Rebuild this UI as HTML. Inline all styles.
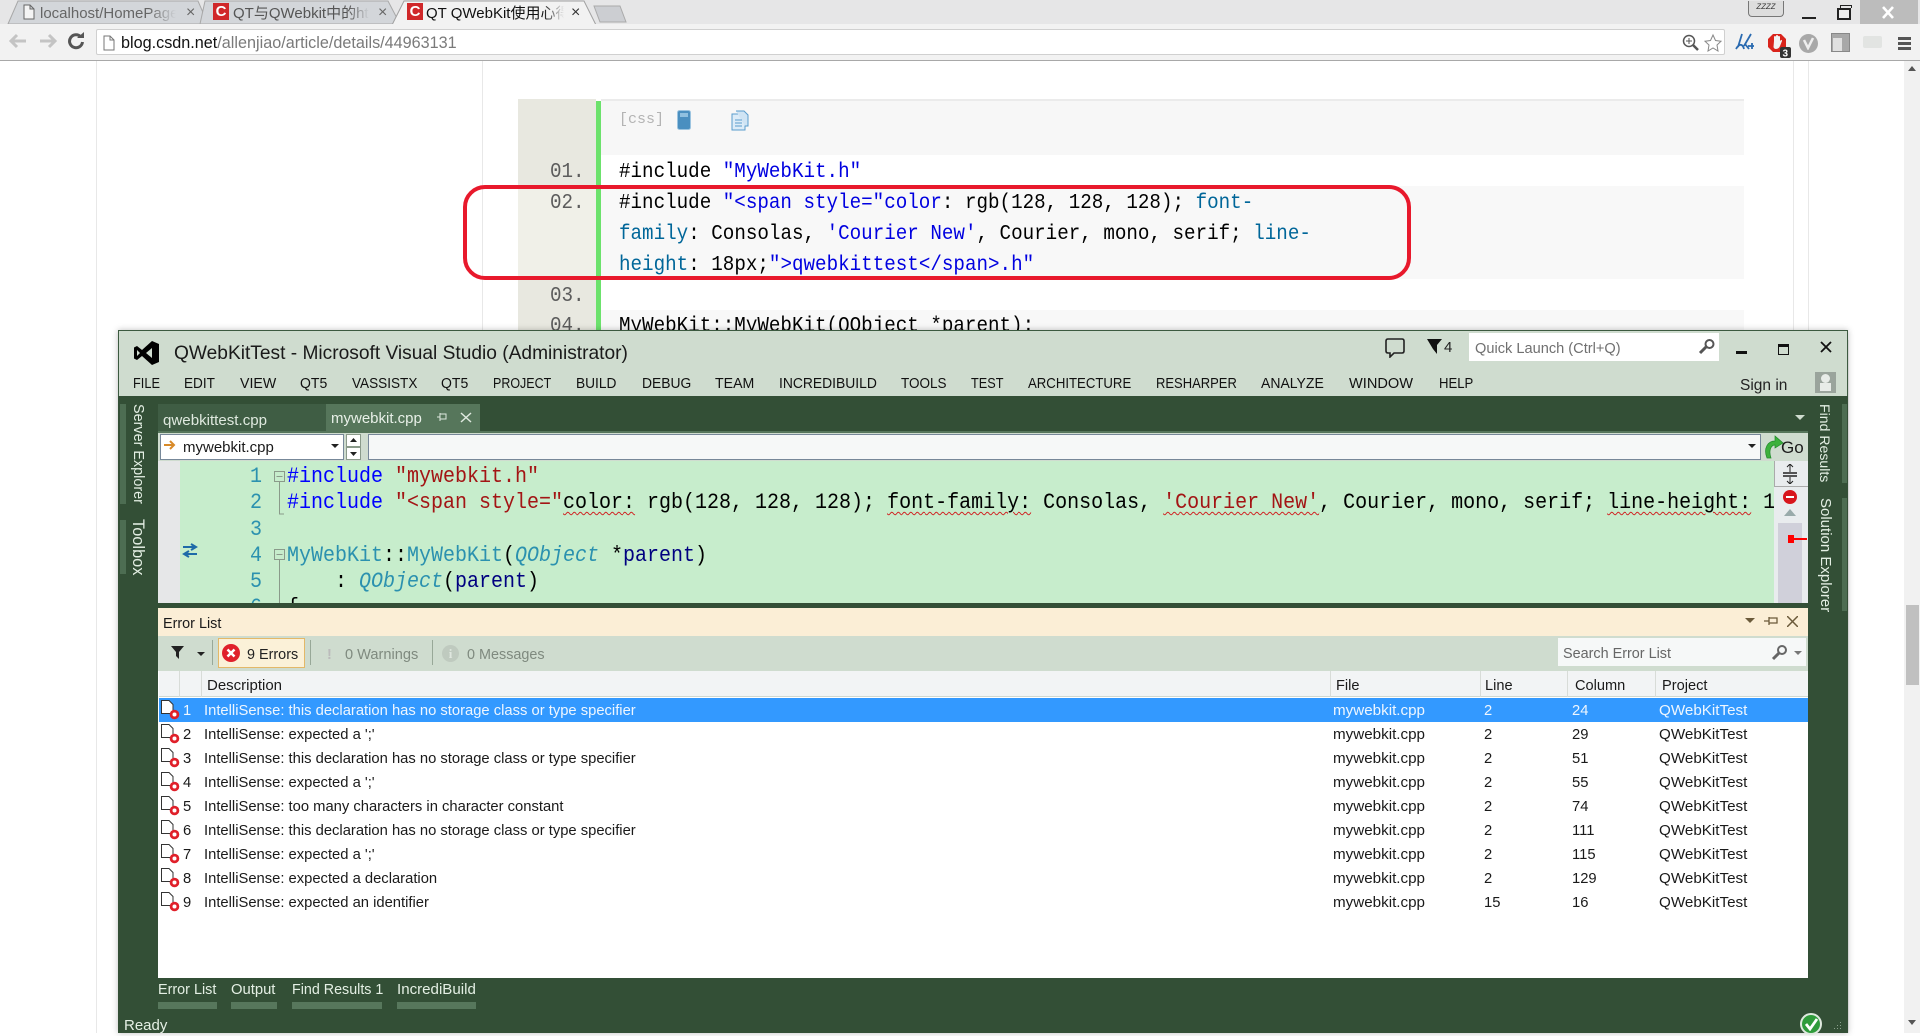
<!DOCTYPE html>
<html><head><meta charset="utf-8"><title>QT QWebKit</title>
<style>
*{box-sizing:border-box}
html,body{margin:0;padding:0;width:1920px;height:1033px;overflow:hidden;background:#fff;font-family:"Liberation Sans","Noto Sans CJK SC",sans-serif;color:#000}
.a{position:absolute}
.t{position:absolute;white-space:nowrap;line-height:20px;height:20px}
.m{position:absolute;white-space:pre;font-family:"Liberation Mono",monospace;transform-origin:0 50%;line-height:24px;height:24px}
.w .m{font-size:21px;transform:scaleX(.915);color:#000}
.e .m{font-size:22px;transform:scaleX(.909);color:#000}
.b{color:#0000e0}.c{color:#006699}
.k{color:#0000ff}.s{color:#a31515}.y{color:#2b91af}.p{color:#000080}.i{font-style:italic}
.q{text-decoration:underline wavy #d02020 1px;text-underline-offset:3px}
.menu .t{font-size:14.6px;top:374px;color:#111;transform-origin:0 50%}
.row{position:absolute;left:159px;width:1649px;height:24px;font-size:14.78px;color:#1a1a1a}
.row .t{top:3px}
.row .f{font-size:15.2px}
.row svg{position:absolute;left:2px;top:2px}
.v{position:absolute;white-space:nowrap;color:#e4efe4;line-height:20px;writing-mode:vertical-rl}
.h{position:absolute;top:676px;font-size:14.6px;line-height:20px;color:#1a1a1a}
</style></head><body>

<!-- browser chrome -->
<div class="a" style="left:0;top:0;width:1920px;height:24px;background:#e6e6e7"></div>
<svg class="a" style="left:0;top:0" width="640" height="26" viewBox="0 0 640 26">
<path d="M8 24L18 1H198L208 24Z" fill="#d3d6da" stroke="#a8a8a8"/>
<path d="M200 24L205 1H388L400 24Z" fill="#d3d6da" stroke="#a8a8a8"/>
<path d="M392 25L404 1H584L596 25Z" fill="#f2f2f2" stroke="#a0a0a0"/>
<path d="M594 6H620L626 22H600Z" fill="#ccced2" stroke="#aaa"/>
</svg>
<svg class="a" style="left:23px;top:4px" width="12" height="16" viewBox="0 0 12 16"><path d="M1 1H7L11 5V15H1Z M7 1V5H11" fill="#f4f4f4" stroke="#666"/></svg>
<div class="t" style="left:40px;top:4px;font-size:15px;color:#666;width:136px;overflow:hidden;-webkit-mask-image:linear-gradient(90deg,#000 80%,transparent)">localhost/HomePage</div>
<div class="t" style="left:186px;top:3px;font-size:16px;color:#666">×</div>
<div class="a" style="left:213px;top:3px;width:16px;height:17px;background:#d0282a;color:#fff;font:bold 15px/17px 'Liberation Sans';text-align:center">C</div>
<div class="t" style="left:233px;top:4px;font-size:15px;color:#555;width:136px;overflow:hidden;-webkit-mask-image:linear-gradient(90deg,#000 85%,transparent)">QT与QWebkit中的ht</div>
<div class="t" style="left:378px;top:3px;font-size:16px;color:#666">×</div>
<div class="a" style="left:407px;top:3px;width:16px;height:17px;background:#d0282a;color:#fff;font:bold 15px/17px 'Liberation Sans';text-align:center">C</div>
<div class="t" style="left:426px;top:4px;font-size:15px;color:#111;width:138px;overflow:hidden;-webkit-mask-image:linear-gradient(90deg,#000 85%,transparent)">QT QWebKit使用心得</div>
<div class="t" style="left:571px;top:3px;font-size:16px;color:#333">×</div>

<div class="a" style="left:1748px;top:1px;width:36px;height:16px;background:#ddd;border:1px solid #777;border-top:0;border-radius:0 0 4px 4px;font:italic 8px/14px 'Liberation Mono';text-align:center;color:#333">ZZZZ</div>
<div class="a" style="left:1802px;top:17px;width:14px;height:2px;background:#222"></div>
<div class="a" style="left:1837px;top:8px;width:14px;height:12px;border:2px solid #222;background:#eee"></div>
<div class="a" style="left:1840px;top:5px;width:12px;height:3px;border:1px solid #222;border-bottom:0"></div>
<div class="a" style="left:1860px;top:0;width:58px;height:24px;background:#bcbcbc"></div>
<svg class="a" style="left:1881px;top:6px" width="14" height="13"><path d="M2 1L12 12M12 1L2 12" stroke="#fff" stroke-width="2.6"/></svg>

<div class="a" style="left:0;top:24px;width:1920px;height:37px;background:#f2f2f2;border-bottom:1px solid #a8a8a8"></div>
<svg class="a" style="left:8px;top:32px" width="72" height="20" viewBox="0 0 72 20"><path d="M18 9H4M9 3L3 9L9 15" fill="none" stroke="#c4c4c4" stroke-width="3"/><path d="M32 9H46M41 3L47 9L41 15" fill="none" stroke="#c4c4c4" stroke-width="3"/></svg>
<svg class="a" style="left:67px;top:32px" width="18" height="18" viewBox="0 0 18 18"><path d="M14 5A6.5 6.5 0 1 0 15.5 10" fill="none" stroke="#555" stroke-width="3"/><path d="M10 6H17V0Z" fill="#555"/></svg>
<div class="a" style="left:96px;top:29px;width:1629px;height:26px;background:#fff;border:1px solid #d0d0d0;border-radius:2px"></div>
<svg class="a" style="left:103px;top:35px" width="12" height="16" viewBox="0 0 12 16"><path d="M1 1H7L11 5V15H1Z M7 1V5H11" fill="#fff" stroke="#777"/></svg>
<div class="t" style="left:121px;top:33px;font-size:16.2px;color:#7a7a7a"><span style="color:#111">blog.csdn.net</span>/allenjiao/article/details/44963131</div>
<svg class="a" style="left:1682px;top:34px" width="20" height="18" viewBox="0 0 20 18"><circle cx="7" cy="7" r="5.5" fill="none" stroke="#555" stroke-width="1.5"/><path d="M11 11L16 16" stroke="#555" stroke-width="2.5"/><path d="M4 7H10M7 4V10" stroke="#555"/></svg>
<svg class="a" style="left:1703px;top:33px" width="20" height="20" viewBox="0 0 20 20"><path d="M10 2L12.5 7.5L18 8.2L14 12L15 18L10 15L5 18L6 12L2 8.2L7.500 7.500Z" fill="#fff" stroke="#888"/></svg>
<svg class="a" style="left:1735px;top:33px" width="21" height="20" viewBox="0 0 21 20"><path d="M7 1L3 14M16 1L9 13M1 16C5 9 8 12 9 16M10 11L14 16M13 13H19M17 10V16" fill="none" stroke="#2a6ab0" stroke-width="1.800"/></svg>
<svg class="a" style="left:1767px;top:33px" width="26" height="26" viewBox="0 0 26 26"><path d="M6 1H14L19 6V14L14 19H6L1 14V6Z" fill="#d9241c"/><path d="M7 8V4Q7 3 8 3Q9 3 9 4V7V3Q9 2 10 2Q11 2 11 3V7V3.500Q11 3 12 3Q13 3 13 4V8L14 7Q15 6.500 15 8L13 13Q12 16 9 16Q7 16 6.500 14Z" fill="#f2f2f2"/><rect x="13" y="14" width="11" height="11" rx="2" fill="#333"/><text x="15.500" y="23.500" font-size="10" font-weight="bold" fill="#fff" font-family="Liberation Sans">3</text></svg>
<div class="a" style="left:1799px;top:34px;width:19px;height:19px;border-radius:50%;background:#a8a8a8"></div>
<svg class="a" style="left:1802px;top:37px" width="13" height="13"><path d="M2 3L6 11L11 1" fill="none" stroke="#eee" stroke-width="2.500"/></svg>
<div class="a" style="left:1831px;top:33px;width:19px;height:19px;background:#a8a8a8;border:1px solid #888"></div>
<div class="a" style="left:1833px;top:38px;width:9px;height:13px;background:#e0e0e0"></div>
<div class="a" style="left:1863px;top:36px;width:19px;height:12px;background:#e2e4e2;border-radius:2px"></div>
<div class="a" style="left:1898px;top:37px;width:13px;height:3px;background:#555;box-shadow:0 5px 0 #555,0 10px 0 #555"></div>

<!-- page -->
<div class="a" style="left:96px;top:61px;width:1px;height:972px;background:#e8e8e8"></div>
<div class="a" style="left:482px;top:61px;width:1px;height:300px;background:#e8e8e8"></div>
<div class="a" style="left:1793px;top:61px;width:1px;height:300px;background:#e8e8e8"></div>
<div class="a" style="left:1808px;top:61px;width:1px;height:300px;background:#e8e8e8"></div>
<div class="a" style="left:1848px;top:340px;width:1px;height:693px;background:#eee"></div>
<div class="a" style="left:1904px;top:61px;width:16px;height:972px;background:#f1f1f1"></div>
<div class="a" style="left:1906px;top:605px;width:13px;height:80px;background:#c0c0c0"></div>
<svg class="a" style="left:1907px;top:66px" width="10" height="6"><path d="M5 0L9 5H1Z" fill="#555"/></svg>
<svg class="a" style="left:1907px;top:1020px" width="10" height="6"><path d="M5 5L9 0H1Z" fill="#555"/></svg>

<div class="w">
<div class="a" style="left:518px;top:99px;width:78px;height:241px;background:#e8e8e0"></div>
<div class="a" style="left:518px;top:186px;width:78px;height:93px;background:#f0f0e8"></div>
<div class="a" style="left:601px;top:99px;width:1143px;height:241px;background:#fff"></div>
<div class="a" style="left:601px;top:99px;width:1143px;height:56px;background:#f7f7f7;border-top:2px solid #ebebeb"></div>
<div class="a" style="left:601px;top:186px;width:1143px;height:93px;background:#f8f8f8"></div>
<div class="a" style="left:601px;top:310px;width:1143px;height:30px;background:#f8f8f8"></div>
<div class="a" style="left:596px;top:101px;width:5px;height:239px;background:#6ce26c"></div>
<div class="t" style="left:619px;top:110px;font:15px/20px 'Liberation Mono';color:#b4b4b4">[css]</div>
<svg class="a" style="left:677px;top:110px" width="14" height="20" viewBox="0 0 14 20"><rect x=".5" y=".5" width="13" height="19" rx="2" fill="#4a8fc0" stroke="#9cc4e0"/><rect x="3" y="3" width="8" height="4" fill="#8fc0e0"/></svg>
<svg class="a" style="left:730px;top:110px" width="20" height="22" viewBox="0 0 20 22"><path d="M2 4H12L15 7V20H2Z" fill="#dcecf8" stroke="#5a9ccc"/><path d="M6 1H14L18 5V16H15" fill="#cfe4f4" stroke="#5a9ccc"/><path d="M5 10H12M5 13H12M5 16H12" stroke="#5a9ccc"/></svg>

<div class="m" style="left:550px;top:161px;color:#5c5c5c">01.</div>
<div class="m" style="left:550px;top:192px;color:#5c5c5c">02.</div>
<div class="m" style="left:550px;top:285px;color:#5c5c5c">03.</div>
<div class="m" style="left:550px;top:315px;color:#5c5c5c">04.</div>
<div class="m" style="left:619px;top:161px">#include <span class="b">"MyWebKit.h"</span></div>
<div class="m" style="left:619px;top:192px">#include <span class="b">"&lt;span style="color</span>: rgb(128, 128, 128); <span class="c">font-</span></div>
<div class="m" style="left:619px;top:223px"><span class="c">family</span>: Consolas, <span class="b">'Courier New'</span>, Courier, mono, serif; <span class="c">line-</span></div>
<div class="m" style="left:619px;top:254px"><span class="c">height</span>: 18px;<span class="b">"&gt;qwebkittest&lt;/span&gt;.h"</span></div>
<div class="m" style="left:619px;top:315px">MyWebKit::MyWebKit(QObject *parent):</div>
</div>
<div class="a" style="left:463px;top:185px;width:948px;height:95px;border:4px solid #e8192c;border-radius:22px"></div>

<!-- VS window -->
<div class="a" style="left:118px;top:330px;width:1730px;height:703px;background:#334f36;box-shadow:0 0 6px rgba(0,0,0,.25)"></div>
<div class="a" style="left:118px;top:330px;width:1730px;height:66px;background:#cfdccf;border:1px solid #3c5a40;border-bottom:0"></div>
<svg class="a" style="left:134px;top:340px" width="26" height="26" viewBox="0 0 26 26"><path d="M18 1L25 4V22L18 25L8 16L3 20L0 18.500V7.500L3 6L8 10ZM18 8L12 13L18 18ZM3 10V16L6 13Z" fill="#000" fill-rule="evenodd"/></svg>
<div class="t" style="left:174px;top:344px;font-size:19.17px;color:#1a1a1a">QWebKitTest - Microsoft Visual Studio (Administrator)</div>
<div class="menu">
<div class="t" style="left:133px;transform:scaleX(.875)">FILE</div><div class="t" style="left:184px;transform:scaleX(.93)">EDIT</div><div class="t" style="left:240px;transform:scaleX(.97)">VIEW</div><div class="t" style="left:300px;transform:scaleX(.96)">QT5</div><div class="t" style="left:352px;transform:scaleX(.93)">VASSISTX</div><div class="t" style="left:441px;transform:scaleX(.96)">QT5</div><div class="t" style="left:493px;transform:scaleX(.855)">PROJECT</div><div class="t" style="left:576px;transform:scaleX(.94)">BUILD</div><div class="t" style="left:642px;transform:scaleX(.95)">DEBUG</div><div class="t" style="left:715px;transform:scaleX(.97)">TEAM</div><div class="t" style="left:779px;transform:scaleX(.95)">INCREDIBUILD</div><div class="t" style="left:901px;transform:scaleX(.925)">TOOLS</div><div class="t" style="left:971px;transform:scaleX(.87)">TEST</div><div class="t" style="left:1028px;transform:scaleX(.903)">ARCHITECTURE</div><div class="t" style="left:1156px;transform:scaleX(.89)">RESHARPER</div><div class="t" style="left:1261px;transform:scaleX(.96)">ANALYZE</div><div class="t" style="left:1349px">WINDOW</div><div class="t" style="left:1439px;transform:scaleX(.9)">HELP</div>
</div>
<div class="t" style="left:1740px;top:376px;font-size:15.5px;color:#222">Sign in</div>
<div class="a" style="left:1815px;top:372px;width:21px;height:21px;background:#9aa49c"></div>
<div class="a" style="left:1821px;top:374px;width:9px;height:9px;border-radius:50%;background:#e8ece8"></div>
<div class="a" style="left:1820px;top:383px;width:11px;height:8px;background:#e8ece8"></div>
<svg class="a" style="left:1385px;top:338px" width="20" height="20" viewBox="0 0 20 20"><path d="M3 1H17Q19 1 19 3V13Q19 15 17 15H9L5 19V15H3Q1 15 1 13V3Q1 1 3 1Z" fill="none" stroke="#222" stroke-width="1.600"/></svg>
<svg class="a" style="left:1426px;top:338px" width="17" height="17"><path d="M1 1H16L11 7V16L7 11Z" fill="#111"/></svg>
<div class="t" style="left:1444px;top:338px;font-size:15px;color:#222">4</div>
<div class="a" style="left:1469px;top:333px;width:250px;height:28px;background:#fff"></div>
<div class="t" style="left:1475px;top:339px;font-size:14.6px;color:#707070">Quick Launch (Ctrl+Q)</div>
<svg class="a" style="left:1698px;top:338px" width="18" height="18" viewBox="0 0 18 18"><circle cx="11.500" cy="6" r="4" fill="none" stroke="#555" stroke-width="2"/><path d="M8 9L2 15" stroke="#555" stroke-width="3"/></svg>
<div class="a" style="left:1736px;top:351px;width:11px;height:3px;background:#111"></div>
<div class="a" style="left:1778px;top:344px;width:11px;height:11px;border:1px solid #111;border-top:3px solid #111"></div>
<svg class="a" style="left:1820px;top:341px" width="12" height="12"><path d="M1 1L11 11M11 1L1 11" stroke="#111" stroke-width="1.800"/></svg>

<!-- side bars -->
<div class="a" style="left:120px;top:404px;width:6px;height:100px;background:#4d6d52"></div>
<div class="a" style="left:120px;top:520px;width:6px;height:54px;background:#4d6d52"></div>
<div class="v" style="left:128px;top:404px;font-size:14.4px">Server Explorer</div>
<div class="v" style="left:128px;top:519px;font-size:16.4px">Toolbox</div>
<div class="a" style="left:1842px;top:404px;width:5px;height:79px;background:#4d6d52"></div>
<div class="a" style="left:1842px;top:498px;width:5px;height:113px;background:#4d6d52"></div>
<div class="v" style="left:1815px;top:404px;font-size:14.1px">Find Results</div>
<div class="v" style="left:1815px;top:498px;font-size:15px">Solution Explorer</div>

<!-- doc tabs -->
<div class="a" style="left:158px;top:404px;width:168px;height:28px;background:#3f5d44"></div>
<div class="a" style="left:326px;top:404px;width:154px;height:28px;background:#56765b"></div>
<div class="a" style="left:158px;top:431px;width:1650px;height:3px;background:#56765b"></div>
<div class="t" style="left:163px;top:411px;font-size:15.1px;color:#dfe9df">qwebkittest.cpp</div>
<div class="t" style="left:331px;top:409px;font-size:15px;color:#e8f0e8">mywebkit.cpp</div>
<svg class="a" style="left:436px;top:411px" width="12" height="12" viewBox="0 0 12 12"><path d="M1 6H4M4 2V10M4 3H10V8H4" fill="none" stroke="#dfe9df"/></svg>
<svg class="a" style="left:460px;top:412px" width="12" height="11"><path d="M1 1L11 10M11 1L1 10" stroke="#dfe9df" stroke-width="1.500"/></svg>
<svg class="a" style="left:1795px;top:415px" width="10" height="6"><path d="M0 0H10L5 5Z" fill="#cfdccf"/></svg>

<!-- nav bar -->
<div class="a" style="left:158px;top:433px;width:1650px;height:28px;background:#cfdccf"></div>
<div class="a" style="left:160px;top:434px;width:184px;height:26px;background:#fff;border:1px solid #789"></div>
<svg class="a" style="left:163px;top:439px" width="13" height="13"><path d="M1 6H10M7 2L11 6L7 10" fill="none" stroke="#d88a28" stroke-width="2"/></svg>
<div class="t" style="left:183px;top:438px;font-size:15px;color:#1a1a1a">mywebkit.cpp</div>
<svg class="a" style="left:331px;top:444px" width="8" height="5"><path d="M0 0H8L4 4Z" fill="#222"/></svg>
<div class="a" style="left:346px;top:434px;width:15px;height:13px;background:#fff;border:1px solid #8a9a8a"></div>
<div class="a" style="left:346px;top:447px;width:15px;height:13px;background:#fff;border:1px solid #8a9a8a"></div>
<svg class="a" style="left:350px;top:437px" width="7" height="22"><path d="M3.500 1L7 5H0ZM0 15H7L3.500 19Z" fill="#222"/></svg>
<div class="a" style="left:368px;top:434px;width:1393px;height:26px;background:#f6f8f8;border:1px solid #789"></div>
<svg class="a" style="left:1748px;top:444px" width="8" height="5"><path d="M0 0H8L4 4Z" fill="#222"/></svg>
<svg class="a" style="left:1764px;top:435px" width="20" height="24" viewBox="0 0 20 24"><path d="M3 23C-1 13 4 6 11 6V1L19 8L11 13V10C8 10 4 14 7 23Z" fill="#3cb13c" stroke="#1f8a2a" stroke-width=".7"/></svg>
<div class="t" style="left:1781px;top:438px;font-size:17px;color:#1a1a1a">Go</div>

<!-- editor -->
<div class="e">
<div class="a" style="left:158px;top:461px;width:22px;height:142px;background:#e6e7e8"></div>
<div class="a" style="left:180px;top:461px;width:1594px;height:142px;background:#c7edcc;overflow:hidden"></div>
<svg class="a" style="left:181px;top:543px" width="18" height="16" viewBox="0 0 18 16"><path d="M2 4H14M10 1L15 4L10 7M16 11H4M8 8L3 11L8 14" fill="none" stroke="#1e6aa8" stroke-width="2"/></svg>
<div class="a" style="left:180px;top:461px;width:1594px;height:142px;overflow:hidden">
<div class="m" style="left:70px;top:4px;color:#2b91af">1</div>
<div class="m" style="left:70px;top:30px;color:#2b91af">2</div>
<div class="m" style="left:70px;top:57px;color:#2b91af">3</div>
<div class="m" style="left:70px;top:83px;color:#2b91af">4</div>
<div class="m" style="left:70px;top:109px;color:#2b91af">5</div>
<div class="m" style="left:70px;top:135px;color:#2b91af">6</div>
<div class="m" style="left:107px;top:4px"><span class="k">#include</span> <span class="s">"mywebkit.h"</span></div>
<div class="m" style="left:107px;top:30px"><span class="k">#include</span> <span class="s">"&lt;span style="</span><span class="q">color:</span> rgb(128, 128, 128); <span class="q">font-family:</span> Consolas, <span class="s q">'Courier New'</span>, Courier, mono, serif; <span class="q">line-height:</span> 18px;"&gt;</div>
<div class="m" style="left:107px;top:83px"><span class="y">MyWebKit</span>::<span class="y">MyWebKit</span>(<span class="y i">QObject</span> *<span class="p">parent</span>)</div>
<div class="m" style="left:107px;top:109px">    : <span class="y i">QObject</span>(<span class="p">parent</span>)</div>
<div class="m" style="left:107px;top:135px">{</div>
</div>
<svg class="a" style="left:273px;top:468px" width="14" height="135" viewBox="0 0 14 135"><g fill="none" stroke="#8a9a8a"><rect x="1.500" y="3.500" width="10" height="10" fill="#c7edcc"/><path d="M3.500 8.500H9.500M6.500 13.500V46H11"/><rect x="1.500" y="81.500" width="10" height="10" fill="#c7edcc"/><path d="M3.500 86.500H9.500M6.500 91.500V135"/></g></svg>
<div class="a" style="left:1774px;top:461px;width:34px;height:142px;background:#e9ecee"></div>
<div class="a" style="left:1774px;top:461px;width:34px;height:26px;border-left:1px solid #aaa;border-bottom:1px solid #aaa"></div>
<svg class="a" style="left:1782px;top:464px" width="18" height="20" viewBox="0 0 18 20"><path d="M1 9H15M1 12H15" stroke="#222" stroke-width="1.500"/><path d="M8 0V8M8 13V20M5 3L8 0L11 3M5 17L8 20L11 17" fill="none" stroke="#222"/></svg>
<div class="a" style="left:1783px;top:490px;width:14px;height:14px;border-radius:50%;background:#d8151c"></div>
<div class="a" style="left:1786px;top:496px;width:8px;height:2px;background:#fff"></div>
<svg class="a" style="left:1784px;top:509px" width="12" height="8"><path d="M6 0L12 7H0Z" fill="#9aa"/></svg>
<div class="a" style="left:1778px;top:523px;width:24px;height:80px;background:#d0d0da"></div>
<div class="a" style="left:1788px;top:535px;width:6px;height:8px;background:#f00"></div>
<div class="a" style="left:1794px;top:538px;width:13px;height:2px;background:#f00"></div>
</div>

<!-- error list -->
<div class="a" style="left:158px;top:608px;width:1650px;height:370px;background:#fff"></div>
<div class="a" style="left:158px;top:608px;width:1650px;height:28px;background:#fbeed6"></div>
<div class="t" style="left:163px;top:614px;font-size:14.4px;color:#1a1a1a">Error List</div>
<svg class="a" style="left:1745px;top:618px" width="10" height="6"><path d="M0 0H10L5 5Z" fill="#6b5a3a"/></svg>
<svg class="a" style="left:1764px;top:616px" width="15" height="10"><path d="M0 5H5M5 1V9M5 2H13V7H5" fill="none" stroke="#6b5a3a" stroke-width="1.300"/></svg>
<svg class="a" style="left:1787px;top:616px" width="11" height="11"><path d="M0 0L11 11M11 0L0 11" stroke="#6b5a3a" stroke-width="1.500"/></svg>
<div class="a" style="left:158px;top:636px;width:1650px;height:35px;background:#cfdccf"></div>
<svg class="a" style="left:171px;top:646px" width="14" height="14"><path d="M0 0H13L8 6V13L5 10V6Z" fill="#222"/></svg>
<svg class="a" style="left:197px;top:652px" width="8" height="5"><path d="M0 0H8L4 4Z" fill="#222"/></svg>
<div class="a" style="left:212px;top:640px;width:1px;height:25px;background:#98a898"></div>
<div class="a" style="left:218px;top:638px;width:87px;height:30px;background:#fbf1d8;border:1px solid #e3b868"></div>
<svg class="a" style="left:222px;top:644px" width="18" height="18" viewBox="0 0 18 18"><circle cx="9" cy="9" r="9" fill="#e0202a"/><path d="M5.500 5.500L12.500 12.500M12.500 5.500L5.500 12.500" stroke="#fff" stroke-width="2.500"/></svg>
<div class="t" style="left:247px;top:645px;font-size:14.4px;color:#222">9 Errors</div>
<div class="a" style="left:310px;top:640px;width:1px;height:25px;background:#98a898"></div>
<div class="t" style="left:327px;top:645px;font-size:14.5px;color:#bbb;font-weight:bold">!</div>
<div class="t" style="left:345px;top:645px;font-size:14.6px;color:#7f8a7f">0 Warnings</div>
<div class="a" style="left:432px;top:640px;width:1px;height:25px;background:#98a898"></div>
<div class="a" style="left:442px;top:645px;width:17px;height:17px;border-radius:50%;background:#bfcabf;color:#dfe7df;font:bold 13px/17px 'Liberation Serif';text-align:center">i</div>
<div class="t" style="left:467px;top:645px;font-size:14.4px;color:#7f8a7f">0 Messages</div>
<div class="a" style="left:1558px;top:638px;width:248px;height:28px;background:#f6f8f8"></div>
<div class="t" style="left:1563px;top:644px;font-size:14.4px;color:#666">Search Error List</div>
<svg class="a" style="left:1771px;top:644px" width="18" height="18" viewBox="0 0 18 18"><circle cx="11" cy="6" r="4" fill="none" stroke="#666" stroke-width="2"/><path d="M8 9L2 15" stroke="#666" stroke-width="3"/></svg>
<svg class="a" style="left:1794px;top:651px" width="8" height="5"><path d="M0 0H8L4 4Z" fill="#777"/></svg>

<div class="a" style="left:159px;top:671px;width:1649px;height:26px;background:#f2f4f5;border-bottom:1px solid #d0d8d0"></div>
<div class="a" style="left:179px;top:671px;width:1px;height:26px;background:#d8dcd8"></div>
<div class="a" style="left:201px;top:671px;width:1px;height:26px;background:#d8dcd8"></div>
<div class="a" style="left:1330px;top:671px;width:1px;height:26px;background:#d8dcd8"></div>
<div class="a" style="left:1480px;top:671px;width:1px;height:26px;background:#d8dcd8"></div>
<div class="a" style="left:1567px;top:671px;width:1px;height:26px;background:#d8dcd8"></div>
<div class="a" style="left:1655px;top:671px;width:1px;height:26px;background:#d8dcd8"></div>
<div class="h" style="left:207px;font-size:15px">Description</div>
<div class="h" style="left:1336px">File</div>
<div class="h" style="left:1485px">Line</div>
<div class="h" style="left:1575px">Column</div>
<div class="h" style="left:1662px">Project</div>

<div class="row" style="top:698px;background:#3399ff;color:#eef6ff"><svg width="20" height="20" viewBox="0 0 20 20"><path d="M.500 .500H8L12 4.500V13.500H.500Z" fill="#fff" stroke="#333"/><circle cx="13.500" cy="14.500" r="4.800" fill="#e0202a"/><circle cx="13.500" cy="14.500" r="2" fill="#fff"/></svg><div class="t" style="left:24px">1</div><div class="t" style="left:45px">IntelliSense: this declaration has no storage class or type specifier</div><div class="t f" style="left:1174px">mywebkit.cpp</div><div class="t" style="left:1325px">2</div><div class="t" style="left:1413px">24</div><div class="t f" style="left:1500px">QWebKitTest</div></div>
<div class="row" style="top:722px"><svg width="20" height="20" viewBox="0 0 20 20"><path d="M.500 .500H8L12 4.500V13.500H.500Z" fill="#fff" stroke="#333"/><circle cx="13.500" cy="14.500" r="4.800" fill="#e0202a"/><circle cx="13.500" cy="14.500" r="2" fill="#fff"/></svg><div class="t" style="left:24px">2</div><div class="t" style="left:45px">IntelliSense: expected a ';'</div><div class="t f" style="left:1174px">mywebkit.cpp</div><div class="t" style="left:1325px">2</div><div class="t" style="left:1413px">29</div><div class="t f" style="left:1500px">QWebKitTest</div></div>
<div class="row" style="top:746px"><svg width="20" height="20" viewBox="0 0 20 20"><path d="M.500 .500H8L12 4.500V13.500H.500Z" fill="#fff" stroke="#333"/><circle cx="13.500" cy="14.500" r="4.800" fill="#e0202a"/><circle cx="13.500" cy="14.500" r="2" fill="#fff"/></svg><div class="t" style="left:24px">3</div><div class="t" style="left:45px">IntelliSense: this declaration has no storage class or type specifier</div><div class="t f" style="left:1174px">mywebkit.cpp</div><div class="t" style="left:1325px">2</div><div class="t" style="left:1413px">51</div><div class="t f" style="left:1500px">QWebKitTest</div></div>
<div class="row" style="top:770px"><svg width="20" height="20" viewBox="0 0 20 20"><path d="M.500 .500H8L12 4.500V13.500H.500Z" fill="#fff" stroke="#333"/><circle cx="13.500" cy="14.500" r="4.800" fill="#e0202a"/><circle cx="13.500" cy="14.500" r="2" fill="#fff"/></svg><div class="t" style="left:24px">4</div><div class="t" style="left:45px">IntelliSense: expected a ';'</div><div class="t f" style="left:1174px">mywebkit.cpp</div><div class="t" style="left:1325px">2</div><div class="t" style="left:1413px">55</div><div class="t f" style="left:1500px">QWebKitTest</div></div>
<div class="row" style="top:794px"><svg width="20" height="20" viewBox="0 0 20 20"><path d="M.500 .500H8L12 4.500V13.500H.500Z" fill="#fff" stroke="#333"/><circle cx="13.500" cy="14.500" r="4.800" fill="#e0202a"/><circle cx="13.500" cy="14.500" r="2" fill="#fff"/></svg><div class="t" style="left:24px">5</div><div class="t" style="left:45px">IntelliSense: too many characters in character constant</div><div class="t f" style="left:1174px">mywebkit.cpp</div><div class="t" style="left:1325px">2</div><div class="t" style="left:1413px">74</div><div class="t f" style="left:1500px">QWebKitTest</div></div>
<div class="row" style="top:818px"><svg width="20" height="20" viewBox="0 0 20 20"><path d="M.500 .500H8L12 4.500V13.500H.500Z" fill="#fff" stroke="#333"/><circle cx="13.500" cy="14.500" r="4.800" fill="#e0202a"/><circle cx="13.500" cy="14.500" r="2" fill="#fff"/></svg><div class="t" style="left:24px">6</div><div class="t" style="left:45px">IntelliSense: this declaration has no storage class or type specifier</div><div class="t f" style="left:1174px">mywebkit.cpp</div><div class="t" style="left:1325px">2</div><div class="t" style="left:1413px">111</div><div class="t f" style="left:1500px">QWebKitTest</div></div>
<div class="row" style="top:842px"><svg width="20" height="20" viewBox="0 0 20 20"><path d="M.500 .500H8L12 4.500V13.500H.500Z" fill="#fff" stroke="#333"/><circle cx="13.500" cy="14.500" r="4.800" fill="#e0202a"/><circle cx="13.500" cy="14.500" r="2" fill="#fff"/></svg><div class="t" style="left:24px">7</div><div class="t" style="left:45px">IntelliSense: expected a ';'</div><div class="t f" style="left:1174px">mywebkit.cpp</div><div class="t" style="left:1325px">2</div><div class="t" style="left:1413px">115</div><div class="t f" style="left:1500px">QWebKitTest</div></div>
<div class="row" style="top:866px"><svg width="20" height="20" viewBox="0 0 20 20"><path d="M.500 .500H8L12 4.500V13.500H.500Z" fill="#fff" stroke="#333"/><circle cx="13.500" cy="14.500" r="4.800" fill="#e0202a"/><circle cx="13.500" cy="14.500" r="2" fill="#fff"/></svg><div class="t" style="left:24px">8</div><div class="t" style="left:45px">IntelliSense: expected a declaration</div><div class="t f" style="left:1174px">mywebkit.cpp</div><div class="t" style="left:1325px">2</div><div class="t" style="left:1413px">129</div><div class="t f" style="left:1500px">QWebKitTest</div></div>
<div class="row" style="top:890px"><svg width="20" height="20" viewBox="0 0 20 20"><path d="M.500 .500H8L12 4.500V13.500H.500Z" fill="#fff" stroke="#333"/><circle cx="13.500" cy="14.500" r="4.800" fill="#e0202a"/><circle cx="13.500" cy="14.500" r="2" fill="#fff"/></svg><div class="t" style="left:24px">9</div><div class="t" style="left:45px">IntelliSense: expected an identifier</div><div class="t f" style="left:1174px">mywebkit.cpp</div><div class="t" style="left:1325px">15</div><div class="t" style="left:1413px">16</div><div class="t f" style="left:1500px">QWebKitTest</div></div>

<!-- bottom tabs -->
<div class="t" style="left:158px;top:980px;font-size:14.4px;color:#e4efe4">Error List</div>
<div class="t" style="left:231px;top:980px;font-size:14.8px;color:#e4efe4">Output</div>
<div class="t" style="left:292px;top:980px;font-size:14.3px;color:#e4efe4">Find Results 1</div>
<div class="t" style="left:397px;top:980px;font-size:15.1px;color:#e4efe4">IncrediBuild</div>
<div class="a" style="left:158px;top:1002px;width:59px;height:7px;background:#57775c"></div>
<div class="a" style="left:231px;top:1002px;width:46px;height:7px;background:#57775c"></div>
<div class="a" style="left:292px;top:1002px;width:90px;height:7px;background:#57775c"></div>
<div class="a" style="left:397px;top:1002px;width:79px;height:7px;background:#57775c"></div>
<div class="t" style="left:124px;top:1016px;font-size:15px;color:#e4efe4">Ready</div>
<div class="a" style="left:1800px;top:1013px;width:22px;height:22px;border-radius:50%;background:#2f9b3b;border:2px solid #dfe9df"></div>
<svg class="a" style="left:1804px;top:1017px" width="15" height="14"><path d="M2 7L6 12L13 2" fill="none" stroke="#fff" stroke-width="2.800"/></svg>
<svg class="a" style="left:1832px;top:1022px" width="10" height="10"><g fill="#8aa08d"><rect x="8" y="0" width="1" height="1"/><rect x="5" y="3" width="1" height="1"/><rect x="8" y="3" width="1" height="1"/><rect x="2" y="6" width="1" height="1"/><rect x="5" y="6" width="1" height="1"/><rect x="8" y="6" width="1" height="1"/></g></svg>
</body></html>
